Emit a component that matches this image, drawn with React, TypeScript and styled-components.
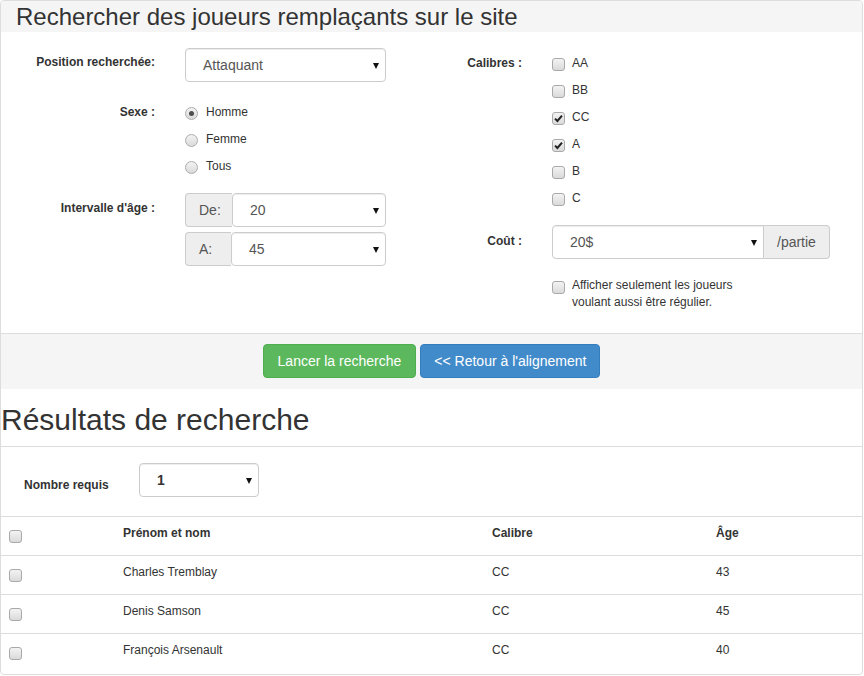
import React from "react";
import styled, { createGlobalStyle } from "styled-components";

const Global = createGlobalStyle`
  html, body { margin: 0; padding: 0; background: #fff; }
  body {
    font-family: "Liberation Sans", Arial, Helvetica, sans-serif;
    color: #333;
    font-size: 12px;
  }
  * { box-sizing: border-box; }
`;

const Panel = styled.div`
  width: 863px;
  border: 1px solid #ddd;
  border-radius: 4px;
  overflow: hidden;
  padding-bottom: 2px;
`;

const PanelHeading = styled.div`
  background: #f5f5f5;
  padding: 1px 0 0 15px;
  height: 31px;
`;

const Title = styled.h3`
  margin: 0;
  font-size: 24px;
  font-weight: normal;
  line-height: 30px;
  color: #333;
`;

const PanelBody = styled.div`
  display: flex;
  padding: 16px 0 22px;
`;

const Column = styled.div<{ $w?: number }>`
  display: flex;
  flex-direction: column;
  ${(p) => (p.$w ? `width: ${p.$w}px; flex-shrink: 0;` : "flex: 1;")}
`;

const FormRow = styled.div<{ $mt?: number }>`
  display: flex;
  gap: 30px;
  align-items: flex-start;
  margin-top: ${(p) => p.$mt ?? 0}px;
`;

const Label = styled.div<{ $w: number; $pt?: number }>`
  width: ${(p) => p.$w}px;
  flex-shrink: 0;
  text-align: right;
  font-weight: bold;
  font-size: 12px;
  line-height: 17px;
  padding-top: ${(p) => p.$pt ?? 7}px;
  color: #333;
`;

const OptionList = styled.div<{ $mt?: number }>`
  display: flex;
  flex-direction: column;
  margin-top: ${(p) => p.$mt ?? 0}px;
`;

const OptionItem = styled.label<{ $gap?: number; $h?: number; $pt?: number }>`
  display: flex;
  align-items: flex-start;
  gap: ${(p) => p.$gap ?? 7}px;
  ${(p) => (p.$h ? `height: ${p.$h}px;` : "")}
  padding-top: ${(p) => p.$pt ?? 6}px;
  font-size: 12px;
  line-height: 17px;
  color: #333;
`;

const OptionText = styled.span<{ $maxW?: number }>`
  ${(p) => (p.$maxW ? `max-width: ${p.$maxW}px;` : "")}
`;

const CheckMark = styled.span<{ $mt?: number }>`
  width: 13px;
  height: 13px;
  flex-shrink: 0;
  margin-top: ${(p) => p.$mt ?? 3}px;
  border: 1px solid #a9a9a9;
  border-radius: 3px;
  background: linear-gradient(#f3f3f3, #dadada);
  display: flex;
  align-items: center;
  justify-content: center;
`;

const RadioMark = styled.span`
  width: 13px;
  height: 13px;
  flex-shrink: 0;
  margin-top: 3px;
  border: 1px solid #acacac;
  border-radius: 50%;
  background: linear-gradient(#f3f3f3, #dadada);
  display: flex;
  align-items: center;
  justify-content: center;
`;

const RadioDot = styled.span`
  width: 5px;
  height: 5px;
  border-radius: 50%;
  background: #4d4d4d;
`;

const SelectBox = styled.div<{ $w: number; $bold?: boolean; $flatRight?: boolean }>`
  width: ${(p) => p.$w}px;
  height: 34px;
  flex-shrink: 0;
  display: flex;
  align-items: center;
  padding: 0 6px 0 17px;
  border: 1px solid #ccc;
  border-radius: ${(p) => (p.$flatRight ? "4px 0 0 4px" : "4px")};
  box-shadow: inset 0 1px 1px rgba(0, 0, 0, 0.075);
  background: #fff;
  font-size: 14px;
  color: ${(p) => (p.$bold ? "#333" : "#555")};
  font-weight: ${(p) => (p.$bold ? "bold" : "normal")};
`;

const SelectValue = styled.span`
  flex: 1;
`;

const Caret = styled.span`
  width: 0;
  height: 0;
  border-left: 3px solid transparent;
  border-right: 3px solid transparent;
  border-top: 6px solid #111;
  margin-top: 1px;
`;

const InputGroup = styled.div<{ $mt?: number }>`
  display: flex;
  margin-top: ${(p) => p.$mt ?? 0}px;
`;

const Addon = styled.div<{ $w?: number; $side: "left" | "right" }>`
  ${(p) => (p.$w ? `width: ${p.$w}px; padding-left: 13px;` : "padding: 0 13px;")}
  height: 34px;
  display: flex;
  align-items: center;
  background: #eee;
  border: 1px solid #ccc;
  ${(p) =>
    p.$side === "left"
      ? "border-right: 0; border-radius: 4px 0 0 4px;"
      : "border-left: 0; border-radius: 0 4px 4px 0;"}
  font-size: 14px;
  color: #555;
`;

const PanelFooter = styled.div`
  border-top: 1px solid #ddd;
  background: #f5f5f5;
  padding: 10px 0 11px;
  display: flex;
  justify-content: center;
  gap: 4px;
`;

const Button = styled.button<{ $variant: "success" | "primary" }>`
  height: 34px;
  padding: 0 ${(p) => (p.$variant === "success" ? 14 : 13)}px;
  border-radius: 4px;
  font-family: inherit;
  font-size: 14px;
  color: #fff;
  cursor: pointer;
  background: ${(p) => (p.$variant === "success" ? "#5cb85c" : "#428bca")};
  border: 1px solid ${(p) => (p.$variant === "success" ? "#4cae4c" : "#357ebd")};
`;

const ResultsHeading = styled.h2`
  margin: 0;
  padding: 14px 0 10px 0;
  font-size: 30px;
  font-weight: normal;
  line-height: 33px;
  color: #333;
  border-bottom: 1px solid #ddd;
`;

const Controls = styled.div`
  display: flex;
  align-items: flex-start;
  padding: 16px 0 19px 23px;
`;

const ControlLabel = styled.div`
  width: 115px;
  font-weight: bold;
  font-size: 12px;
  line-height: 17px;
  padding-top: 14px;
`;

const Row = styled.div<{ $head?: boolean }>`
  display: grid;
  grid-template-columns: 114px 369px 224px 1fr;
  height: 39px;
  border-top: 1px solid #ddd;
  font-size: 12px;
  line-height: 17px;
  font-weight: ${(p) => (p.$head ? "bold" : "normal")};
  color: #333;
`;

const Cell = styled.div`
  padding: 8px 8px 0;
`;

const CheckCell = styled.div`
  padding-left: 8px;
  display: flex;
  align-items: center;
`;

function Checkbox({ checked, mt }: { checked?: boolean; mt?: number }) {
  return (
    <CheckMark $mt={mt}>
      {checked && (
        <svg width="9" height="9" viewBox="0 0 9 9">
          <path d="M1 4.6 L3.4 7 L8 1.6" fill="none" stroke="#222" strokeWidth="2" />
        </svg>
      )}
    </CheckMark>
  );
}

function Radio({ checked }: { checked?: boolean }) {
  return <RadioMark>{checked && <RadioDot />}</RadioMark>;
}

function Select({ value, w, bold, flatRight }: { value: string; w: number; bold?: boolean; flatRight?: boolean }) {
  return (
    <SelectBox $w={w} $bold={bold} $flatRight={flatRight}>
      <SelectValue>{value}</SelectValue>
      <Caret />
    </SelectBox>
  );
}

const calibres = [
  { name: "AA", checked: false },
  { name: "BB", checked: false },
  { name: "CC", checked: true },
  { name: "A", checked: true },
  { name: "B", checked: false },
  { name: "C", checked: false },
];

const players = [
  { name: "Charles Tremblay", calibre: "CC", age: 43 },
  { name: "Denis Samson", calibre: "CC", age: 45 },
  { name: "François Arsenault", calibre: "CC", age: 40 },
];

export default function App() {
  return (
    <>
      <Global />
      <Panel>
        <PanelHeading>
          <Title>Rechercher des joueurs remplaçants sur le site</Title>
        </PanelHeading>
        <PanelBody>
          <Column $w={431}>
            <FormRow>
              <Label $w={154} $pt={6}>Position recherchée:</Label>
              <Select value="Attaquant" w={201} />
            </FormRow>
            <FormRow $mt={16}>
              <Label $w={154} $pt={6}>Sexe :</Label>
              <OptionList>
                {["Homme", "Femme", "Tous"].map((s, i) => (
                  <OptionItem key={s} $gap={8} $h={27}>
                    <Radio checked={i === 0} />
                    <span>{s}</span>
                  </OptionItem>
                ))}
              </OptionList>
            </FormRow>
            <FormRow $mt={14}>
              <Label $w={154} $pt={7}>Intervalle d'âge :</Label>
              <div>
                <InputGroup>
                  <Addon $w={47} $side="left">De:</Addon>
                  <Select value="20" w={154} />
                </InputGroup>
                <InputGroup $mt={5}>
                  <Addon $w={46} $side="left">A:</Addon>
                  <Select value="45" w={155} />
                </InputGroup>
              </div>
            </FormRow>
          </Column>
          <Column>
            <FormRow>
              <Label $w={90} $pt={7}>Calibres :</Label>
              <OptionList $mt={1}>
                {calibres.map((c) => (
                  <OptionItem key={c.name} $h={27}>
                    <Checkbox checked={c.checked} />
                    <span>{c.name}</span>
                  </OptionItem>
                ))}
              </OptionList>
            </FormRow>
            <FormRow $mt={14}>
              <Label $w={90} $pt={8}>Coût :</Label>
              <InputGroup>
                <Select value="20$" w={212} flatRight />
                <Addon $side="right">/partie</Addon>
              </InputGroup>
            </FormRow>
            <FormRow $mt={13}>
              <Label $w={90} $pt={0} />
              <OptionItem $pt={5}>
                <Checkbox mt={4} />
                <OptionText $maxW={180}>
                  Afficher seulement les joueurs voulant aussi être régulier.
                </OptionText>
              </OptionItem>
            </FormRow>
          </Column>
        </PanelBody>
        <PanelFooter>
          <Button $variant="success">Lancer la recherche</Button>
          <Button $variant="primary">&lt;&lt; Retour à l'alignement</Button>
        </PanelFooter>
        <ResultsHeading>Résultats de recherche</ResultsHeading>
        <Controls>
          <ControlLabel>Nombre requis</ControlLabel>
          <Select value="1" w={120} bold />
        </Controls>
        <Row $head>
          <CheckCell>
            <Checkbox mt={0} />
          </CheckCell>
          <Cell>Prénom et nom</Cell>
          <Cell>Calibre</Cell>
          <Cell>Âge</Cell>
        </Row>
        {players.map((p) => (
          <Row key={p.name}>
            <CheckCell>
              <Checkbox mt={0} />
            </CheckCell>
            <Cell>{p.name}</Cell>
            <Cell>{p.calibre}</Cell>
            <Cell>{p.age}</Cell>
          </Row>
        ))}
      </Panel>
    </>
  );
}
